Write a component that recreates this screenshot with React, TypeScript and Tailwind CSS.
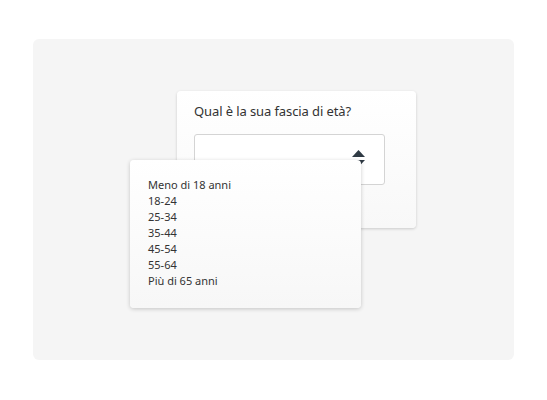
export default function App() {
  const options = ['Meno di 18 anni', '18-24', '25-34', '35-44', '45-54', '55-64', 'Più di 65 anni'];

  return (
    <div className="w-[547px] h-[400px] bg-white pt-[39px] px-[33px] font-['Noto_Sans',sans-serif] text-[#333333]">
      {/* Grey stage holding the two overlapping cards */}
      <div className="relative w-[481px] h-[321px] rounded-[6px] bg-[#f5f5f5]">
        {/* Back card: question + select */}
        <div className="absolute left-[144px] top-[52px] w-[239px] h-[137px] rounded-[4px] bg-gradient-to-b from-white to-[#f8f8f8] shadow-[0_1px_3px_rgba(0,0,0,0.18)] px-[17px] pt-[11px]">
          <p className="text-[13px] leading-[18px] tracking-[-0.1px]">Qual è la sua fascia di età?</p>
          <div className="mt-[14px] w-[191px] h-[51px] rounded-[3px] border border-[#d4d4d4] bg-white flex items-start justify-end pr-[19px] pt-[15px]">
            <svg width="13" height="17" viewBox="0 0 13 17" className="text-[#2f3a44]">
              <path d="M6.5 0 L13 7 L0 7 Z" fill="currentColor" />
              <path d="M0 10 L13 10 L6.5 17 Z" fill="currentColor" />
            </svg>
          </div>
        </div>

        {/* Front card: open option list */}
        <div className="absolute left-[97px] top-[121px] w-[231px] h-[148px] rounded-[4px] bg-gradient-to-b from-white to-[#f7f7f7] shadow-[0_1px_4px_rgba(0,0,0,0.2)] pl-[18px] pt-[17px]">
          <ul className="text-[11px] leading-[16px]">
            {options.map((o) => (
              <li key={o}>{o}</li>
            ))}
          </ul>
        </div>
      </div>
    </div>
  );
}
